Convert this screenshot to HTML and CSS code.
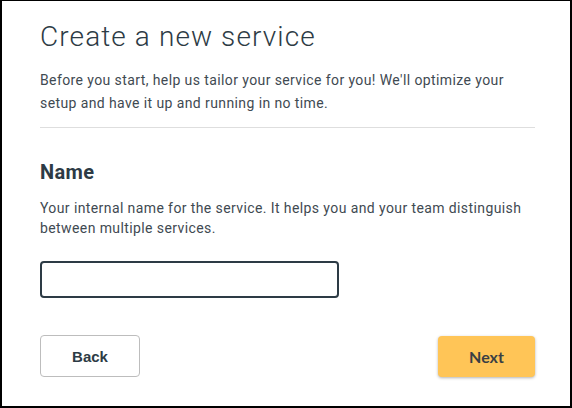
FILE: index.html
```html
<!DOCTYPE html>
<html>
<head>
<meta charset="utf-8">
<link rel="stylesheet" href="styles.css">
</head>
<body>
<div class="frame">
  <h1 class="title">Create a new service</h1>
  <p class="intro">Before you start, help us tailor your service for you! We'll optimize your setup and have it up and running in no time.</p>
  <hr class="divider">
  <h2 class="label">Name</h2>
  <p class="hint">Your internal name for the service. It helps you and your team distinguish between multiple services.</p>
  <input class="field" type="text">
  <div class="actions">
    <button class="btn btn-back">Back</button>
    <button class="btn btn-next">Next</button>
  </div>
</div>
</body>
</html>
```
FILE: styles.css
```css
html, body {
  margin: 0;
  padding: 0;
  background: #fff;
}
.frame {
  box-sizing: border-box;
  width: 572px;
  height: 408px;
  border-top: 1px solid #000;
  border-left: 2px solid #000;
  border-right: 2px solid #000;
  border-bottom: 2px solid #000;
  padding: 0 35px 0 38px;
  font-family: Roboto, "Noto Sans", sans-serif;
  color: #2d3b45;
  display: flex;
  flex-direction: column;
}
.title {
  margin: 18px 0 0;
  font-size: 28px;
  line-height: 36px;
  font-weight: 300;
  letter-spacing: 1.1px;
  color: #2d3b45;
}
.intro {
  margin: 14px 0 0;
  font-size: 14px;
  line-height: 23px;
  letter-spacing: 0.4px;
  color: #3f4a52;
}
.divider {
  margin: 12px 0 0;
  border: 0;
  border-top: 1px solid #dedede;
  height: 0;
}
.label {
  margin: 30px 0 0;
  font-size: 20px;
  line-height: 28px;
  font-weight: 700;
  letter-spacing: 0.4px;
  color: #2d3b45;
}
.hint {
  margin: 12px 0 0;
  font-size: 14px;
  line-height: 20px;
  letter-spacing: 0.4px;
  color: #3f4a52;
}
.field {
  box-sizing: border-box;
  margin: 23px 0 0;
  width: 299px;
  height: 37px;
  border: 2px solid #2d3b45;
  border-radius: 4px;
  padding: 0 10px;
  font: inherit;
}
.actions {
  margin-top: 37px;
  display: flex;
  justify-content: space-between;
}
.btn {
  box-sizing: border-box;
  height: 42px;
  border-radius: 4px;
  font-family: "Liberation Sans", Arial, sans-serif;
  font-size: 15px;
  font-weight: 700;
  color: #2d3b45;
  cursor: pointer;
}
.btn-back {
  width: 100px;
  background: #fff;
  border: 1px solid #bdbdbd;
}
.btn-next {
  width: 97px;
  background: #ffc557;
  border: none;
  box-shadow: 0 1px 3px rgba(0,0,0,0.3);
  margin-top: 1px;
  height: 41px;
  font-family: Lato, "Liberation Sans", sans-serif;
  font-size: 16px;
  color: #3a3f44;
}
```
